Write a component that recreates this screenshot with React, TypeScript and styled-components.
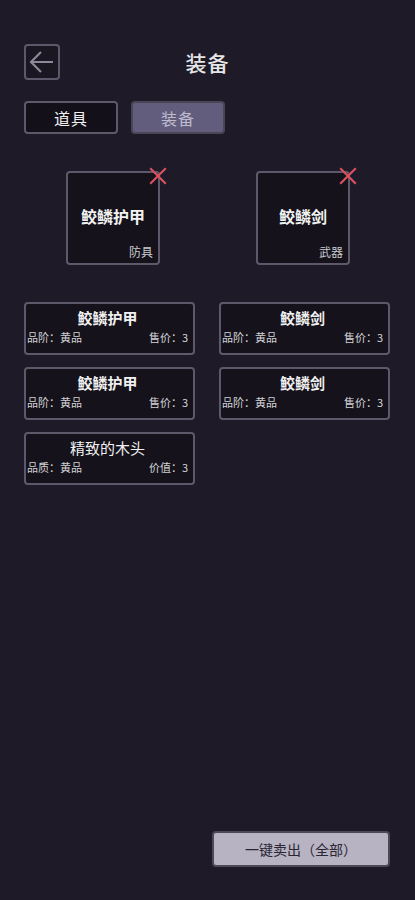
import React from "react";
import styled, { createGlobalStyle } from "styled-components";

const Global = createGlobalStyle`
  html, body { margin: 0; padding: 0; background: #1f1a28; }
  body { font-family: "Noto Sans CJK SC", "Noto Sans", sans-serif; }
  * { box-sizing: border-box; }
`;

const Page = styled.div`
  width: 415px;
  height: 900px;
  background: #1f1a28;
  display: flex;
  flex-direction: column;
  padding: 44px 24px 0 24px;
  color: #ececec;
`;

const Header = styled.div`
  position: relative;
  height: 36px;
  display: flex;
  align-items: center;
  justify-content: center;
`;

const BackButton = styled.div`
  position: absolute;
  left: 0;
  top: 0;
  width: 36px;
  height: 36px;
  border: 2px solid #5e596a;
  border-radius: 4px;
  background: #1a1622;
  display: flex;
  align-items: center;
  justify-content: center;
`;

const Title = styled.div`
  font-size: 21px;
  font-weight: 500;
  color: #e6e6e6;
  letter-spacing: 1px;
`;

const Tabs = styled.div`
  display: flex;
  gap: 13px;
  margin-top: 21px;
`;

const Tab = styled.div<{ $active?: boolean }>`
  width: 94px;
  height: 33px;
  border: 2px solid ${(p) => (p.$active ? "#4a4656" : "#5e596a")};
  border-radius: 4px;
  background: ${(p) => (p.$active ? "#625d7c" : "#13101a")};
  color: ${(p) => (p.$active ? "#bdbad0" : "#f0f0f0")};
  font-size: 16px;
  display: flex;
  align-items: center;
  justify-content: center;
  letter-spacing: 1px;
`;

const Slots = styled.div`
  display: flex;
  justify-content: space-between;
  padding: 0 41px 0 42px;
  margin-top: 37px;
`;

const Slot = styled.div`
  position: relative;
  width: 94px;
  height: 94px;
  border: 2px solid #5e596a;
  border-radius: 4px;
  background: #15121b;
  display: flex;
  align-items: center;
  justify-content: center;
`;

const SlotName = styled.div`
  font-size: 16px;
  font-weight: 700;
  color: #f2f2f2;
  margin-top: -4px;
`;

const SlotType = styled.div`
  position: absolute;
  right: 5px;
  bottom: 3px;
  font-size: 12px;
  color: #c9c9cf;
`;

const RemoveMark = styled.div`
  position: absolute;
  right: -9px;
  top: -7px;
  width: 18px;
  height: 18px;
`;

const Grid = styled.div`
  display: grid;
  grid-template-columns: 171px 171px;
  column-gap: 24px;
  row-gap: 12px;
  margin-top: 37px;
`;

const Card = styled.div`
  height: 53px;
  border: 2px solid #5e596a;
  border-radius: 4px;
  background: #15121b;
  display: flex;
  flex-direction: column;
  padding: 2px 5px 0 1px;
`;

const CardName = styled.div<{ $light?: boolean }>`
  text-align: center;
  font-size: 15px;
  font-weight: ${(p) => (p.$light ? 400 : 700)};
  color: #f0f0f0;
  line-height: 22px;
  margin-top: 1px;
`;

const CardInfo = styled.div`
  display: flex;
  justify-content: space-between;
  font-size: 11px;
  color: #d2d2d6;
  line-height: 16px;
`;

const Spacer = styled.div`
  flex: 1;
`;

const Footer = styled.div`
  display: flex;
  justify-content: flex-end;
  padding: 0 1px 33px 0;
`;

const SellButton = styled.div`
  width: 178px;
  height: 36px;
  border: 2px solid #4c4858;
  border-radius: 4px;
  background: #b7b3c3;
  color: #2a2633;
  font-size: 14px;
  display: flex;
  align-items: center;
  justify-content: center;
`;

const Cross = () => (
  <RemoveMark>
    <svg width="18" height="18" viewBox="0 0 18 18">
      <path d="M2 2 L16 16 M16 2 L2 16" stroke="#d9505e" strokeWidth="2.2" strokeLinecap="square" />
    </svg>
  </RemoveMark>
);

type Item = { name: string; left: string; right: string; light?: boolean };

const items: Item[] = [
  { name: "鲛鳞护甲", left: "品阶：黄品", right: "售价：3" },
  { name: "鲛鳞剑", left: "品阶：黄品", right: "售价：3" },
  { name: "鲛鳞护甲", left: "品阶：黄品", right: "售价：3" },
  { name: "鲛鳞剑", left: "品阶：黄品", right: "售价：3" },
  { name: "精致的木头", left: "品质：黄品", right: "价值：3", light: true },
];

export default function App() {
  return (
    <>
      <Global />
      <Page>
        <Header>
          <BackButton>
            <svg width="28" height="26" viewBox="0 0 28 26">
              <path d="M25 13 H4 M13 3 L3 13 L13 23" stroke="#8c8898" strokeWidth="2.2" fill="none" strokeLinejoin="miter" />
            </svg>
          </BackButton>
          <Title>装备</Title>
        </Header>
        <Tabs>
          <Tab>道具</Tab>
          <Tab $active>装备</Tab>
        </Tabs>
        <Slots>
          <Slot>
            <SlotName>鲛鳞护甲</SlotName>
            <SlotType>防具</SlotType>
            <Cross />
          </Slot>
          <Slot>
            <SlotName>鲛鳞剑</SlotName>
            <SlotType>武器</SlotType>
            <Cross />
          </Slot>
        </Slots>
        <Grid>
          {items.map((it, i) => (
            <Card key={i}>
              <CardName $light={it.light}>{it.name}</CardName>
              <CardInfo>
                <span>{it.left}</span>
                <span>{it.right}</span>
              </CardInfo>
            </Card>
          ))}
        </Grid>
        <Spacer />
        <Footer>
          <SellButton>一键卖出（全部）</SellButton>
        </Footer>
      </Page>
    </>
  );
}
